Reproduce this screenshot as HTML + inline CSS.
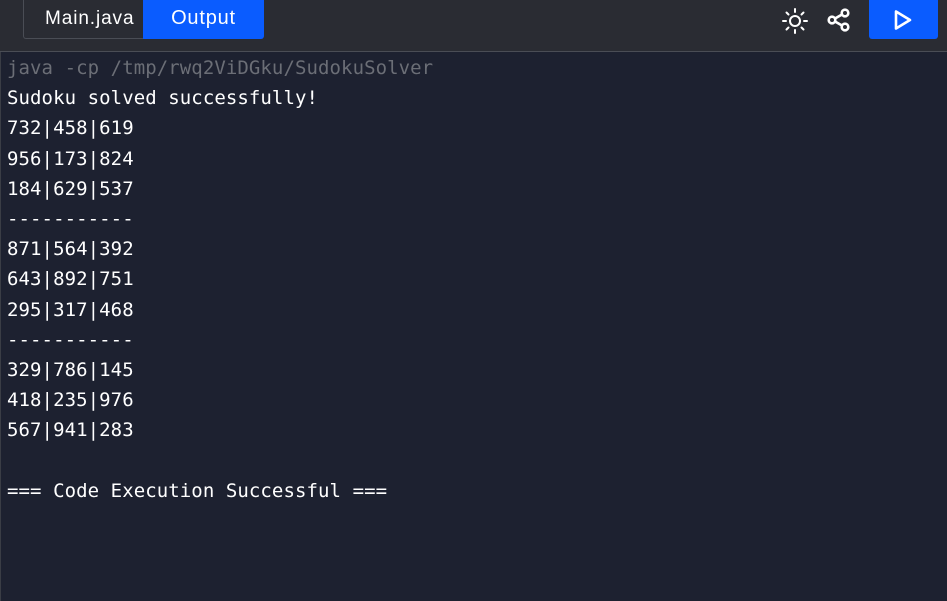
<!DOCTYPE html>
<html><head><meta charset="utf-8"><style>
html,body{margin:0;padding:0;width:947px;height:601px;overflow:hidden;background:#1d2130;}
.hdr{position:absolute;left:0;top:0;width:947px;height:51px;background:#2a2c33;border-bottom:1px solid #4a4d55;}
.tab1{position:absolute;left:23px;top:0;width:119px;height:38px;border:1px solid #4a4d55;border-top:none;border-radius:0 0 0 3px;color:#fff;font:19px "Liberation Sans",sans-serif;line-height:37px;letter-spacing:0.9px;}
.tab1 span{position:absolute;left:21px;}
.tab2{position:absolute;left:143px;top:0;width:121px;height:39px;background:#0a5cff;color:#fff;font:20px "Liberation Sans",sans-serif;line-height:37px;text-align:center;border-radius:0 0 3px 0;letter-spacing:0.8px;}
.run{position:absolute;left:869px;top:0;width:69px;height:39px;background:#0a5cff;border-radius:0 0 3px 3px;}
.out{position:absolute;left:0;top:52px;width:946px;height:549px;border-left:1px solid #3a3d45;}
pre{margin:0;padding:0 0 0 6px;font:19px "DejaVu Sans Mono",monospace;letter-spacing:0.08px;line-height:30.2px;color:#fff;position:absolute;top:1px;}
.g{color:#6b6e76;}
</style></head><body>
<div class="hdr">
<div class="tab1"><span>Main.java</span></div>
<div class="tab2">Output</div>
<svg style="position:absolute;left:780px;top:6px" width="30" height="30" viewBox="0 0 30 30" fill="none" stroke="#fff" stroke-width="2" stroke-linecap="round"><circle cx="15" cy="15" r="5"/><path d="M15 3v3M15 24v3M3 15h3M24 15h3M6.5 6.5l2 2M21.5 21.5l2 2M6.5 23.5l2-2M21.5 8.5l2-2"/></svg>
<svg style="position:absolute;left:825px;top:6px" width="28" height="28" viewBox="0 0 28 28" fill="none" stroke="#fff" stroke-width="2.6"><circle cx="20" cy="7" r="3.3"/><circle cx="7" cy="14" r="3.3"/><circle cx="20" cy="21" r="3.3"/><path d="M10 12.5l7-4M10 15.5l7 4"/></svg>
<div class="run"><svg style="position:absolute;left:24px;top:9px" width="20" height="22" viewBox="0 0 20 22" fill="none" stroke="#fff" stroke-width="2.6" stroke-linejoin="round"><path d="M3 2.5v17l14-8.5z"/></svg></div>
</div>
<div class="out"><pre><span class="g">java -cp /tmp/rwq2ViDGku/SudokuSolver</span>
Sudoku solved successfully!
732|458|619
956|173|824
184|629|537
-----------
871|564|392
643|892|751
295|317|468
-----------
329|786|145
418|235|976
567|941|283

=== Code Execution Successful ===</pre></div>
</body></html>
